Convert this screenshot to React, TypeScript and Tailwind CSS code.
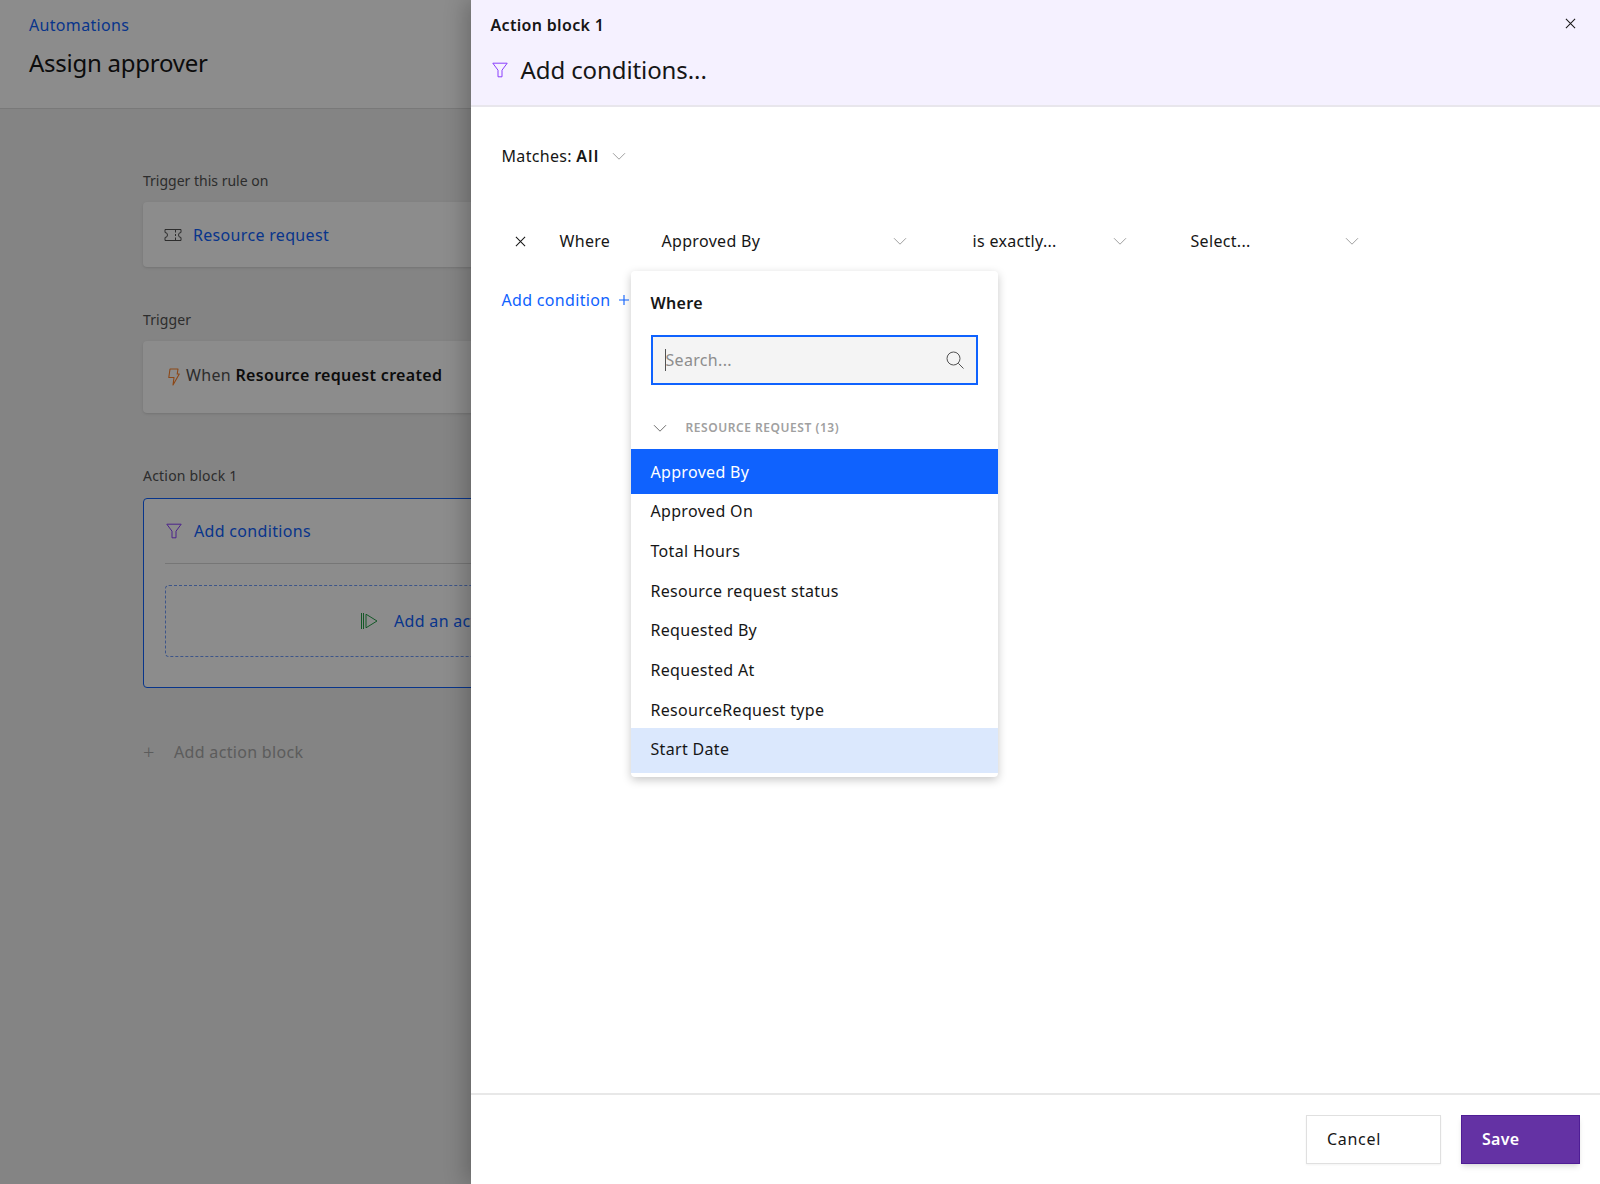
const items = ["Approved On", "Total Hours", "Resource request status", "Requested By", "Requested At", "ResourceRequest type"];

function Chevron({ className }: { className?: string }) {
  return (
    <svg width="16" height="16" viewBox="0 0 16 16" fill="none" stroke="currentColor" strokeWidth="1" className={className}>
      <path d="M2 5.2 8 11.2l6-6" />
    </svg>
  );
}

function Cross({ size = 12 }: { size?: number }) {
  return (
    <svg width={size} height={size} viewBox="0 0 12 12" fill="none" stroke="currentColor" strokeWidth="1.1">
      <path d="M1 1l10 10M11 1 1 11" />
    </svg>
  );
}

function Funnel({ className }: { className?: string }) {
  return (
    <svg width="16" height="16" viewBox="0 0 16 16" fill="none" stroke="currentColor" strokeWidth="1" className={className}>
      <path d="M.8 1.2h14.4L10 8.2v6.6H6V8.2z" strokeLinejoin="round" />
    </svg>
  );
}

function Select({ label, width, chevronGap }: { label: string; width: string; chevronGap: string }) {
  return (
    <div className={`flex items-center ${width}`}>
      <span className="text-[#161616]">{label}</span>
      <Chevron className={`text-[#a0a0a0] ${chevronGap}`} />
    </div>
  );
}

export default function App() {
  return (
    <div className="relative w-full h-[1184px] overflow-hidden bg-[#f0f0f0] text-[16px] tracking-[0.32px] font-['Noto_Sans',sans-serif]">
      {/* Page behind */}
      <header className="h-[109px] bg-white border-b border-[#dcdcdc] pl-[29px] pt-[13px]">
        <div className="text-[#0f62fe] leading-6">Automations</div>
        <h1 className="text-[#161616] text-[24px] tracking-[-0.25px] leading-8 mt-[10px]">Assign approver</h1>
      </header>
      <div className="pl-[143px] w-[1100px]">
        <div className="text-[14px] tracking-[0px] text-[#525252] leading-5 mt-[62px]">Trigger this rule on</div>
        <div className="h-[65px] mt-[11px] bg-white rounded shadow-sm flex items-center pl-[21px] gap-[11px]">
          <svg width="18" height="14" viewBox="0 0 18 14" fill="none" stroke="#525252" strokeWidth="1">
            <path d="M1 1.5h16v3a2.5 2.5 0 0 0 0 5v3H1v-3a2.5 2.5 0 0 0 0-5zM11.5 2v2.5M11.5 6v2M11.5 9.5V12" />
          </svg>
          <span className="text-[#0f62fe]">Resource request</span>
        </div>
        <div className="text-[14px] tracking-[0.1px] text-[#525252] leading-5 mt-[43px]">Trigger</div>
        <div className="h-[72px] mt-[11px] bg-white rounded shadow-sm flex items-center pl-[25px] gap-[6px]">
          <svg width="12" height="18" viewBox="0 0 12 18" fill="none" stroke="#ff832b" strokeWidth="1.1">
            <path d="M2 1h8l-.8 5H11.3L5 17l1-7.5H.8z" strokeLinejoin="round" />
          </svg>
          <span className="text-[#525252] pb-[4px]">
            When <span className="font-semibold text-[#161616]">Resource request created</span>
          </span>
        </div>
        <div className="text-[14px] tracking-[0.2px] text-[#525252] leading-5 mt-[53px]">Action block 1</div>
        <div className="h-[190px] mt-[12px] bg-white rounded border-[1.5px] border-[#0f62fe] px-[21px]">
          <div className="h-[65px] flex items-center pl-[1px] gap-[12px] border-b border-[#d8d8d8]">
            <Funnel className="text-[#8a3ffc]" />
            <span className="text-[#0f62fe]">Add conditions</span>
          </div>
          <div className="h-[72px] mt-[21px] rounded border-[1.5px] border-dashed border-[#6f9bfa] flex items-center pl-[195px] gap-[16px]">
            <svg width="17" height="16" viewBox="0 0 17 16" fill="none" stroke="#24a148" strokeWidth="1">
              <path d="M.5 0v16M2.5 0v16M5 1.2 16 8 5 14.8z" />
            </svg>
            <span className="text-[#0f62fe]">Add an action</span>
          </div>
        </div>
        <div className="flex items-center mt-[52px] text-[#a8a8a8]">
          <span className="w-[31px] text-[20px] font-light leading-6">+</span>
          <span>Add action block</span>
        </div>
      </div>

      {/* Dim layer */}
      <div className="absolute inset-0 bg-black/45" />

      {/* Side panel */}
      <aside className="absolute top-0 bottom-0 right-0 w-[1129.5px] bg-white flex flex-col shadow-[-6px_0_20px_rgba(0,0,0,0.22)]">
        <div className="h-[107px] shrink-0 bg-[#f5f1ff] border-b-2 border-[#e8e6ec] pl-[20px] pr-[25px] pt-[13px] relative">
          <div className="font-semibold text-[#161616] leading-6">Action block 1</div>
          <div className="flex items-center mt-[17px] gap-[13px]">
            <Funnel className="text-[#8a3ffc] ml-[1px]" />
            <span className="text-[24px] tracking-[-0.1px] leading-8 text-[#161616]">Add conditions...</span>
          </div>
          <div className="absolute right-[24px] top-[18px] text-[#161616]">
            <Cross size={11} />
          </div>
        </div>

        <div className="flex-1 relative pl-[31px]">
          <div className="flex items-center mt-[37px] h-6 text-[#161616]">
            <span>Matches: <span className="font-semibold tracking-[1px]">All</span></span>
            <Chevron className="text-[#a0a0a0] ml-[12px]" />
          </div>
          <div className="flex items-center mt-[61px] h-6">
            <span className="w-[10px] ml-[13px] text-[#161616]"><Cross size={11} /></span>
            <span className="w-[102px] ml-[35px] text-[#161616]">Where</span>
            <Select label="Approved By" width="w-[311px]" chevronGap="ml-[132px]" />
            <Select label="is exactly..." width="w-[218px]" chevronGap="ml-[55px]" />
            <Select label="Select..." width="w-[180px]" chevronGap="ml-[93px]" />
          </div>
          <div className="flex items-center mt-[35px] h-6 gap-[8px] text-[#0f62fe]">
            <span>Add condition</span>
            <svg width="12" height="12" viewBox="0 0 12 12" fill="none" stroke="currentColor" strokeWidth="1.1">
              <path d="M6 1v10M1 6h10" />
            </svg>
          </div>

          {/* Dropdown */}
          <div className="absolute left-[160px] top-[164px] w-[367px] h-[506px] bg-white rounded shadow-[0_3px_10px_rgba(0,0,0,0.22)]">
            <div className="pl-[20px] pt-[20px] font-semibold text-[#161616] leading-6">Where</div>
            <div className="mx-[20px] mt-[20px] h-[50px] bg-[#f4f4f4] border-2 border-[#0f62fe] flex items-center pl-[12px] pr-[12px]">
              <span className="w-px h-[22px] bg-[#525252] shrink-0" />
              <span className="text-[#8d8d8d] flex-1">Search...</span>
              <svg width="18" height="18" viewBox="0 0 18 18" fill="none" stroke="#525252" strokeWidth="1">
                <circle cx="7.5" cy="7.5" r="6.5" />
                <path d="M12.3 12.3 17.5 17.5" />
              </svg>
            </div>
            <div className="flex items-center h-[64px] pt-[21px] pl-[21px] gap-[18px]">
              <Chevron className="text-[#6f6f6f]" />
              <span className="text-[12px] tracking-[0.55px] font-semibold text-[#a0a0a0]">RESOURCE REQUEST (13)</span>
            </div>
            <div className="h-[45px] bg-[#0f62fe] text-white flex items-center pl-[20px]">Approved By</div>
            <div className="flex flex-col gap-[5.8px] mb-[1px]">
              {items.map((item) => (
                <div key={item} className="h-[34px] flex items-center pl-[20px] text-[#161616]">{item}</div>
              ))}
            </div>
            <div className="h-[45px] bg-[#dbe8fd] flex items-center pl-[20px] pb-[2px] text-[#161616]">Start Date</div>
          </div>
        </div>

        <div className="h-[91px] shrink-0 border-t-2 border-[#e8e8e8] flex justify-end items-start gap-[20px] pt-[20px] pr-[20px]">
          <button type="button" className="w-[135px] h-[49px] pb-[2px] border border-[#e0e0e0] text-left pl-[20px] tracking-[0.7px] text-[#161616] shadow-xs">Cancel</button>
          <button type="button" className="w-[119px] h-[49px] pb-[2px] border border-[#4f1d95] bg-[#6432a4] text-left pl-[20px] font-semibold text-white shadow-md">Save</button>
        </div>
      </aside>
    </div>
  );
}
